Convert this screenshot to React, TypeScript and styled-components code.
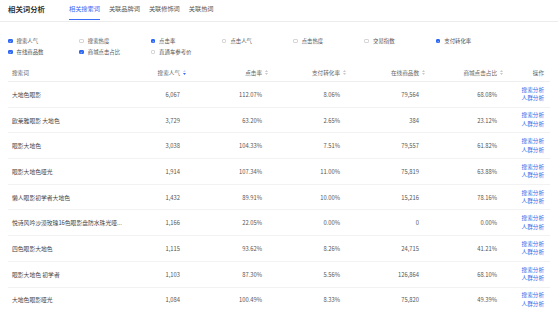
import React from 'react';
import styled, {createGlobalStyle} from 'styled-components';

const GlobalStyle = createGlobalStyle`
  html, body {
    margin: 0;
    padding: 0;
    background: #fff;
  }
  body {
    font-family: "Noto Sans CJK SC", "Noto Sans", sans-serif;
    color: #333;
  }
`;

const Page = styled.div`
  width: 558px;
  height: 311px;
  overflow: hidden;
`;

const Header = styled.div`
  display: flex;
  align-items: stretch;
  height: 21px;
  border-bottom: 1px solid #ececec;
  padding-left: 8px;
`;

const Title = styled.div`
  font-size: 7.4px;
  font-weight: 700;
  color: #333;
  line-height: 18px;
  width: 61px;
`;

const Tabs = styled.div`
  display: flex;
  gap: 9px;
`;

const Tab = styled.div<{active?: boolean}>`
  font-size: 6.2px;
  line-height: 18px;
  height: 20px;
  box-sizing: border-box;
  color: ${({active}) => (active ? '#3d6cf5' : '#555')};
  border-bottom: 1.2px solid ${({active}) => (active ? '#3d6cf5' : 'transparent')};
`;

const Filters = styled.div`
  display: grid;
  grid-template-columns: repeat(7, 71.3px);
  grid-auto-rows: 11px;
  padding: 13.5px 0 0 8px;
  height: 42px;
  box-sizing: border-box;
`;

const Option = styled.label`
  display: flex;
  align-items: center;
  gap: 4px;
  font-size: 5.4px;
  color: #555;
`;

const Box = styled.span<{checked?: boolean}>`
  width: 4.5px;
  height: 4.5px;
  border-radius: 1px;
  box-sizing: border-box;
  display: flex;
  align-items: center;
  justify-content: center;
  background: ${({checked}) => (checked ? '#2f68f3' : '#fff')};
  border: 0.6px solid ${({checked}) => (checked ? '#2f68f3' : '#d6d6d6')};
`;

const Table = styled.div`
  margin: 0 8px;
`;

const cols = '112px 60px 82px 78px 79px 78px 47px';

const HeadRow = styled.div`
  display: grid;
  grid-template-columns: ${cols};
  height: 17px;
  align-items: center;
  border-bottom: 1px solid #eeeeee;
  font-size: 5.6px;
  color: #666;
`;

const Row = styled.div`
  display: grid;
  grid-template-columns: ${cols};
  height: 25.7px;
  box-sizing: border-box;
  align-items: center;
  border-bottom: 1px solid #f2f2f2;
  font-size: 5.8px;
  color: #555;
`;

const HeadCell = styled.div<{left?: boolean; sort?: boolean}>`
  display: flex;
  align-items: center;
  justify-content: ${({left}) => (left ? 'flex-start' : 'flex-end')};
  padding-left: ${({left}) => (left ? '4px' : '0')};
  margin-right: ${({sort}) => (sort ? '-6px' : '0')};
  gap: 3px;
`;

const Cell = styled.div<{left?: boolean}>`
  text-align: ${({left}) => (left ? 'left' : 'right')};
  padding-left: ${({left}) => (left ? '4px' : '0')};
  white-space: nowrap;
  color: ${({left}) => (left ? '#444' : '#555')};
`;

const Actions = styled.div`
  display: flex;
  flex-direction: column;
  align-items: flex-end;
  line-height: 8.6px;
`;

const Link = styled.a`
  color: #3366e8;
  font-size: 5.6px;
  text-decoration: none;
`;

const Check = () => (
  <svg width="3.4" height="3" viewBox="0 0 10 8">
    <path d="M1 4l3 3 5-6" fill="none" stroke="#fff" strokeWidth="1.8" />
  </svg>
);

const SortIcon = ({active}: {active?: boolean}) => (
  <svg width="3" height="5" viewBox="0 0 6 10">
    <path d="M3 0L6 4H0z" fill={active ? '#c9d6f8' : '#c8c8c8'} />
    <path d="M3 10L6 6H0z" fill={active ? '#3d6cf5' : '#c8c8c8'} />
  </svg>
);

const options = [
  {label: '搜索人气', checked: true},
  {label: '搜索热度', checked: false},
  {label: '点击率', checked: true},
  {label: '点击人气', checked: false},
  {label: '点击热度', checked: false},
  {label: '交易指数', checked: false},
  {label: '支付转化率', checked: true},
  {label: '在线商品数', checked: true},
  {label: '商城点击占比', checked: true},
  {label: '直通车参考价', checked: false},
];

const rows = [
  ['大地色眼影', '6,067', '112.07%', '8.06%', '79,564', '68.08%'],
  ['欧莱雅眼影 大地色', '3,729', '63.20%', '2.65%', '384', '23.12%'],
  ['眼影大地色', '3,038', '104.33%', '7.51%', '79,557', '61.82%'],
  ['眼影大地色哑光', '1,914', '107.34%', '11.00%', '75,819', '63.88%'],
  ['懒人眼影初学者大地色', '1,432', '89.91%', '10.00%', '15,216', '78.16%'],
  ['悦诗风吟沙漠玫瑰16色眼影盘防水珠光哑...', '1,166', '22.05%', '0.00%', '0', '0.00%'],
  ['四色眼影大地色', '1,115', '93.62%', '8.26%', '24,715', '41.21%'],
  ['眼影大地色 初学者', '1,103', '87.30%', '5.56%', '126,864', '68.10%'],
  ['大地色眼影哑光', '1,084', '100.49%', '8.33%', '75,820', '49.39%'],
];

export default function App() {
  return (
    <Page>
      <GlobalStyle />
      <Header>
        <Title>相关词分析</Title>
        <Tabs>
          <Tab active>相关搜索词</Tab>
          <Tab>关联品牌词</Tab>
          <Tab>关联修饰词</Tab>
          <Tab>关联热词</Tab>
        </Tabs>
      </Header>
      <Filters>
        {options.map((o) => (
          <Option key={o.label}>
            <Box checked={o.checked}>{o.checked && <Check />}</Box>
            {o.label}
          </Option>
        ))}
      </Filters>
      <Table>
        <HeadRow>
          <HeadCell left>搜索词</HeadCell>
          <HeadCell sort>
            搜索人气 <SortIcon active />
          </HeadCell>
          <HeadCell sort>
            点击率 <SortIcon />
          </HeadCell>
          <HeadCell sort>
            支付转化率 <SortIcon />
          </HeadCell>
          <HeadCell sort>
            在线商品数 <SortIcon />
          </HeadCell>
          <HeadCell sort>
            商城点击占比 <SortIcon />
          </HeadCell>
          <HeadCell>操作</HeadCell>
        </HeadRow>
        {rows.map((r) => (
          <Row key={r[0]}>
            <Cell left>{r[0]}</Cell>
            {r.slice(1).map((v, i) => (
              <Cell key={i}>{v}</Cell>
            ))}
            <Actions>
              <Link href="#">搜索分析</Link>
              <Link href="#">人群分析</Link>
            </Actions>
          </Row>
        ))}
      </Table>
    </Page>
  );
}
